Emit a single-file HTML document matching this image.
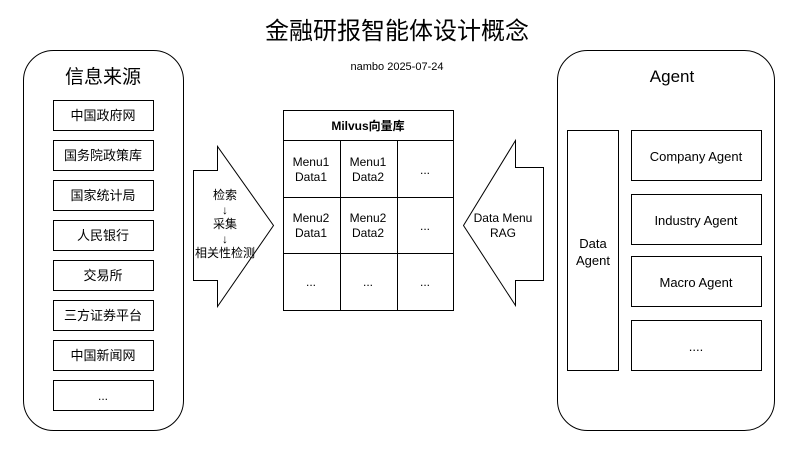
<!DOCTYPE html>
<html><head><meta charset="utf-8"><style>
html,body{margin:0;padding:0;background:#fff;width:794px;height:451px;overflow:hidden}
svg text{font-family:"Liberation Sans","Noto Sans CJK SC",sans-serif;fill:#000}
</style></head><body>
<svg width="794" height="451" viewBox="0 0 794 451" xmlns="http://www.w3.org/2000/svg">
<g fill="none" stroke="#000" stroke-width="1">
<rect x="23.5" y="50.5" width="160" height="380" rx="30"/>
<rect x="53.5" y="100.5" width="100" height="30"/>
<rect x="53.5" y="140.5" width="100" height="30"/>
<rect x="53.5" y="180.5" width="100" height="30"/>
<rect x="53.5" y="220.5" width="100" height="30"/>
<rect x="53.5" y="260.5" width="100" height="30"/>
<rect x="53.5" y="300.5" width="100" height="30"/>
<rect x="53.5" y="340.5" width="100" height="30"/>
<rect x="53.5" y="380.5" width="100" height="30"/>
<path d="M193.5 170.5 H217.5 V146.5 L273.5 225.5 L217.5 306.5 V280.5 H193.5 Z"/>
<rect x="283.5" y="110.5" width="170" height="200"/>
<path d="M283.5 140.5 H453.5 M283.5 197.5 H453.5 M283.5 253.5 H453.5 M340.5 140.5 V310.5 M397.5 140.5 V310.5"/>
<path d="M543.5 167.5 H515.5 V140.5 L463.5 225.5 L515.5 305.5 V280.5 H543.5 Z"/>
<rect x="557.5" y="50.5" width="217" height="380" rx="30"/>
<rect x="567.5" y="130.5" width="51" height="240"/>
<rect x="631.5" y="130.5" width="130" height="50"/>
<rect x="631.5" y="194.5" width="130" height="50"/>
<rect x="631.5" y="256.5" width="130" height="50"/>
<rect x="631.5" y="320.5" width="130" height="50"/>
</g>
<g text-anchor="middle">
<text x="397" y="39" font-size="24">金融研报智能体设计概念</text>
<text x="397" y="70" font-size="11">nambo 2025-07-24</text>
<text x="103" y="83" font-size="19">信息来源</text>
<text x="103" y="120" font-size="13">中国政府网</text>
<text x="103" y="160" font-size="13">国务院政策库</text>
<text x="103" y="200" font-size="13">国家统计局</text>
<text x="103" y="240" font-size="13">人民银行</text>
<text x="103" y="280" font-size="13">交易所</text>
<text x="103" y="320" font-size="13">三方证券平台</text>
<text x="103" y="360" font-size="13">中国新闻网</text>
<text x="103" y="400" font-size="12">...</text>
<text x="225" y="199" font-size="12">检索</text>
<text x="225" y="214" font-size="12">↓</text>
<text x="225" y="228" font-size="12">采集</text>
<text x="225" y="243" font-size="12">↓</text>
<text x="225" y="257" font-size="12">相关性检测</text>
<text x="368" y="130" font-size="12" font-weight="bold">Milvus向量库</text>
<text x="311" y="166" font-size="12">Menu1</text><text x="311" y="181" font-size="12">Data1</text>
<text x="368" y="166" font-size="12">Menu1</text><text x="368" y="181" font-size="12">Data2</text>
<text x="425" y="174" font-size="12">...</text>
<text x="311" y="222" font-size="12">Menu2</text><text x="311" y="237" font-size="12">Data1</text>
<text x="368" y="222" font-size="12">Menu2</text><text x="368" y="237" font-size="12">Data2</text>
<text x="425" y="230" font-size="12">...</text>
<text x="311" y="286" font-size="12">...</text>
<text x="368" y="286" font-size="12">...</text>
<text x="425" y="286" font-size="12">...</text>
<text x="503" y="222" font-size="12">Data Menu</text>
<text x="503" y="237" font-size="12">RAG</text>
<text x="672" y="82" font-size="17">Agent</text>
<text x="593" y="248" font-size="13">Data</text>
<text x="593" y="265" font-size="13">Agent</text>
<text x="696" y="161" font-size="13">Company Agent</text>
<text x="696" y="225" font-size="13">Industry Agent</text>
<text x="696" y="287" font-size="13">Macro Agent</text>
<text x="696" y="351" font-size="13">....</text>
</g>
</svg>
</body></html>
